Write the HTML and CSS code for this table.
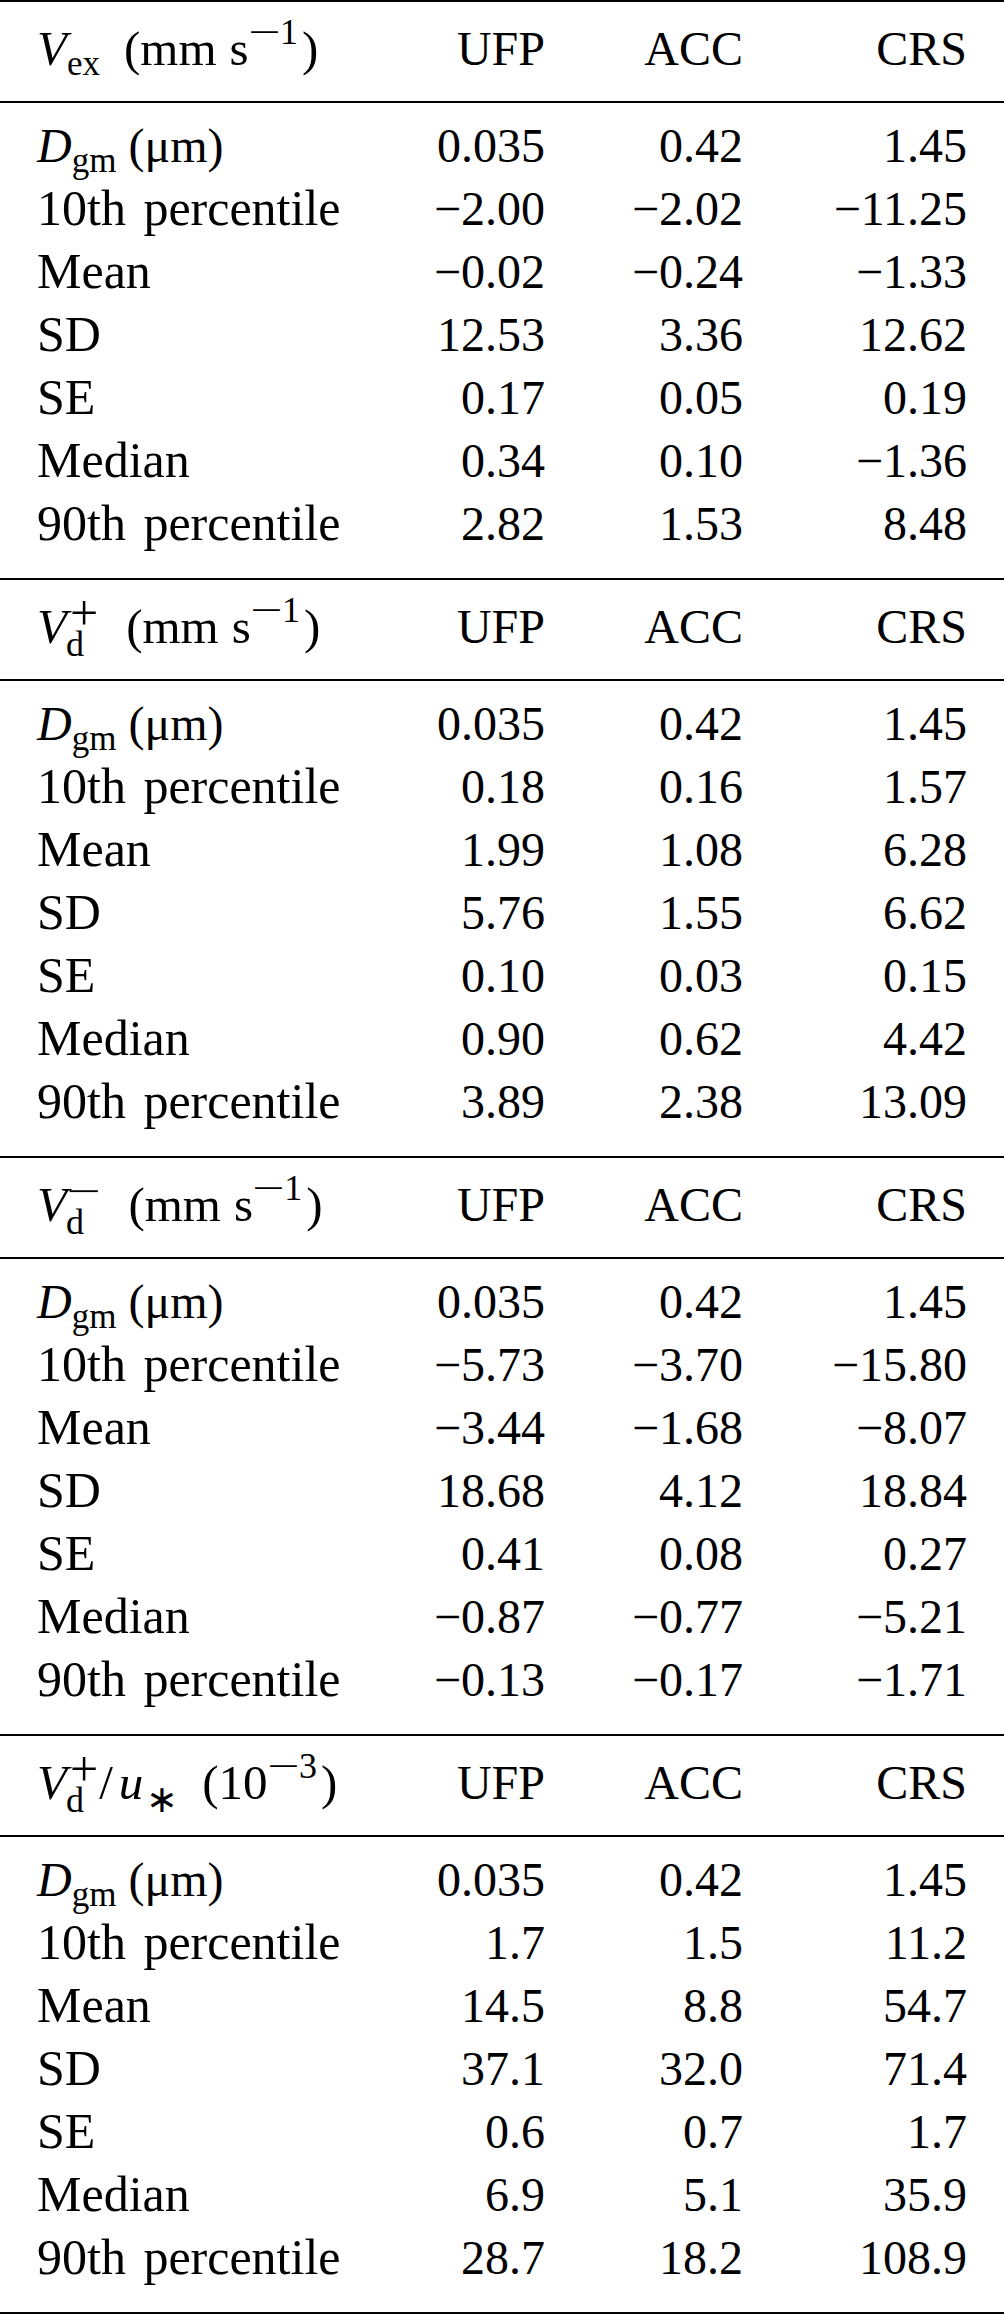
FILE: index.html
```html
<!DOCTYPE html>
<html lang="en">
<head>
<meta charset="utf-8">
<title>Deposition velocity statistics</title>
<link rel="stylesheet" href="styles.css">
</head>
<body>
<div class="table">
  <section class="block">
    <div class="row head">
      <div class="label"><i class="var">V</i><span class="sub">ex</span><span class="gap"></span>(mm<span class="thin"></span>s<span class="sup"><span class="mminus">−</span>1</span>)</div>
      <div class="num">UFP</div><div class="num">ACC</div><div class="num">CRS</div>
    </div>
    <div class="body">
      <div class="row"><div class="label sym"><i class="var">D</i><span class="sub">gm</span> (μm)</div><div class="num">0.035</div><div class="num">0.42</div><div class="num">1.45</div></div>
      <div class="row"><div class="label">10th percentile</div><div class="num">−2.00</div><div class="num">−2.02</div><div class="num">−11.25</div></div>
      <div class="row"><div class="label">Mean</div><div class="num">−0.02</div><div class="num">−0.24</div><div class="num">−1.33</div></div>
      <div class="row"><div class="label">SD</div><div class="num">12.53</div><div class="num">3.36</div><div class="num">12.62</div></div>
      <div class="row"><div class="label">SE</div><div class="num">0.17</div><div class="num">0.05</div><div class="num">0.19</div></div>
      <div class="row"><div class="label">Median</div><div class="num">0.34</div><div class="num">0.10</div><div class="num">−1.36</div></div>
      <div class="row"><div class="label">90th percentile</div><div class="num">2.82</div><div class="num">1.53</div><div class="num">8.48</div></div>
    </div>
  </section>
  <section class="block">
    <div class="row head">
      <div class="label"><i class="var">V</i><span class="ss"><span class="ss-top">+</span><span class="ss-bot">d</span></span>(mm<span class="thin"></span>s<span class="sup"><span class="mminus">−</span>1</span>)</div>
      <div class="num">UFP</div><div class="num">ACC</div><div class="num">CRS</div>
    </div>
    <div class="body">
      <div class="row"><div class="label sym"><i class="var">D</i><span class="sub">gm</span> (μm)</div><div class="num">0.035</div><div class="num">0.42</div><div class="num">1.45</div></div>
      <div class="row"><div class="label">10th percentile</div><div class="num">0.18</div><div class="num">0.16</div><div class="num">1.57</div></div>
      <div class="row"><div class="label">Mean</div><div class="num">1.99</div><div class="num">1.08</div><div class="num">6.28</div></div>
      <div class="row"><div class="label">SD</div><div class="num">5.76</div><div class="num">1.55</div><div class="num">6.62</div></div>
      <div class="row"><div class="label">SE</div><div class="num">0.10</div><div class="num">0.03</div><div class="num">0.15</div></div>
      <div class="row"><div class="label">Median</div><div class="num">0.90</div><div class="num">0.62</div><div class="num">4.42</div></div>
      <div class="row"><div class="label">90th percentile</div><div class="num">3.89</div><div class="num">2.38</div><div class="num">13.09</div></div>
    </div>
  </section>
  <section class="block">
    <div class="row head">
      <div class="label"><i class="var">V</i><span class="ss"><span class="ss-top minus-top"><span class="mminus">−</span></span><span class="ss-bot">d</span></span>(mm<span class="thin"></span>s<span class="sup"><span class="mminus">−</span>1</span>)</div>
      <div class="num">UFP</div><div class="num">ACC</div><div class="num">CRS</div>
    </div>
    <div class="body">
      <div class="row"><div class="label sym"><i class="var">D</i><span class="sub">gm</span> (μm)</div><div class="num">0.035</div><div class="num">0.42</div><div class="num">1.45</div></div>
      <div class="row"><div class="label">10th percentile</div><div class="num">−5.73</div><div class="num">−3.70</div><div class="num">−15.80</div></div>
      <div class="row"><div class="label">Mean</div><div class="num">−3.44</div><div class="num">−1.68</div><div class="num">−8.07</div></div>
      <div class="row"><div class="label">SD</div><div class="num">18.68</div><div class="num">4.12</div><div class="num">18.84</div></div>
      <div class="row"><div class="label">SE</div><div class="num">0.41</div><div class="num">0.08</div><div class="num">0.27</div></div>
      <div class="row"><div class="label">Median</div><div class="num">−0.87</div><div class="num">−0.77</div><div class="num">−5.21</div></div>
      <div class="row"><div class="label">90th percentile</div><div class="num">−0.13</div><div class="num">−0.17</div><div class="num">−1.71</div></div>
    </div>
  </section>
  <section class="block last">
    <div class="row head">
      <div class="label"><i class="var">V</i><span class="ss tight"><span class="ss-top">+</span><span class="ss-bot">d</span></span><span class="slash">/</span><i class="var">u</i><span class="sub star">∗</span><span class="gap small"></span>(10<span class="sup"><span class="mminus">−</span>3</span>)</div>
      <div class="num">UFP</div><div class="num">ACC</div><div class="num">CRS</div>
    </div>
    <div class="body">
      <div class="row"><div class="label sym"><i class="var">D</i><span class="sub">gm</span> (μm)</div><div class="num">0.035</div><div class="num">0.42</div><div class="num">1.45</div></div>
      <div class="row"><div class="label">10th percentile</div><div class="num">1.7</div><div class="num">1.5</div><div class="num">11.2</div></div>
      <div class="row"><div class="label">Mean</div><div class="num">14.5</div><div class="num">8.8</div><div class="num">54.7</div></div>
      <div class="row"><div class="label">SD</div><div class="num">37.1</div><div class="num">32.0</div><div class="num">71.4</div></div>
      <div class="row"><div class="label">SE</div><div class="num">0.6</div><div class="num">0.7</div><div class="num">1.7</div></div>
      <div class="row"><div class="label">Median</div><div class="num">6.9</div><div class="num">5.1</div><div class="num">35.9</div></div>
      <div class="row"><div class="label">90th percentile</div><div class="num">28.7</div><div class="num">18.2</div><div class="num">108.9</div></div>
    </div>
  </section>
</div>
</body>
</html>
```
FILE: styles.css
```css
html, body {
  margin: 0;
  padding: 0;
  background: #fff;
}
body {
  color: #000;
  font-family: "Liberation Serif", "Times New Roman", serif;
  font-size: 48px;
}
.table {
  width: 1004px;
}
.block {
  border-top: 2px solid #000;
}
.block.last {
  border-bottom: 2px solid #000;
}
.row {
  display: grid;
  grid-template-columns: 290px 218px 198px 224px;
  grid-auto-rows: 63px;
  padding: 0 37px;
  line-height: 63px;
  white-space: nowrap;
}
.head {
  padding-top: 15px;
  padding-bottom: 21px;
  border-bottom: 2px solid #000;
}
.head .label {
  font-size: 49px;
}
.body {
  padding-top: 11px;
  padding-bottom: 23px;
}
.body .label {
  font-size: 50px;
  word-spacing: 5px;
}
.body .label.sym {
  font-size: 48px;
  word-spacing: 0;
}
.num {
  text-align: right;
}
.var {
  font-style: italic;
}
.sub {
  font-size: 35px;
  line-height: 0;
  vertical-align: -10px;
  word-spacing: 0;
}
.sub.star {
  font-size: 38px;
  vertical-align: -13px;
  margin-left: 3px;
}
.sup {
  font-size: 36px;
  line-height: 0;
  vertical-align: 21px;
  margin-right: 4px;
}
.mminus {
  display: inline-block;
  transform: scaleX(1.6);
  margin: 0 6px 0 5px;
}
.gap {
  display: inline-block;
  width: 24px;
}
.gap.small {
  width: 24px;
}
.thin {
  display: inline-block;
  width: 13px;
}
.ss {
  display: inline-block;
  font-size: 36px;
  line-height: 31px;
  vertical-align: -13px;
  margin-left: -1px;
  margin-right: 28px;
}
.ss.tight {
  margin-right: 1px;
}
.ss-top {
  display: block;
  font-size: 50px;
  padding-left: 4px;
}
.ss-top.minus-top {
  font-size: 38px;
  padding-left: 2px;
}
.ss-bot {
  display: block;
}
.slash {
  margin: 0 6px 0 0;
}
```
